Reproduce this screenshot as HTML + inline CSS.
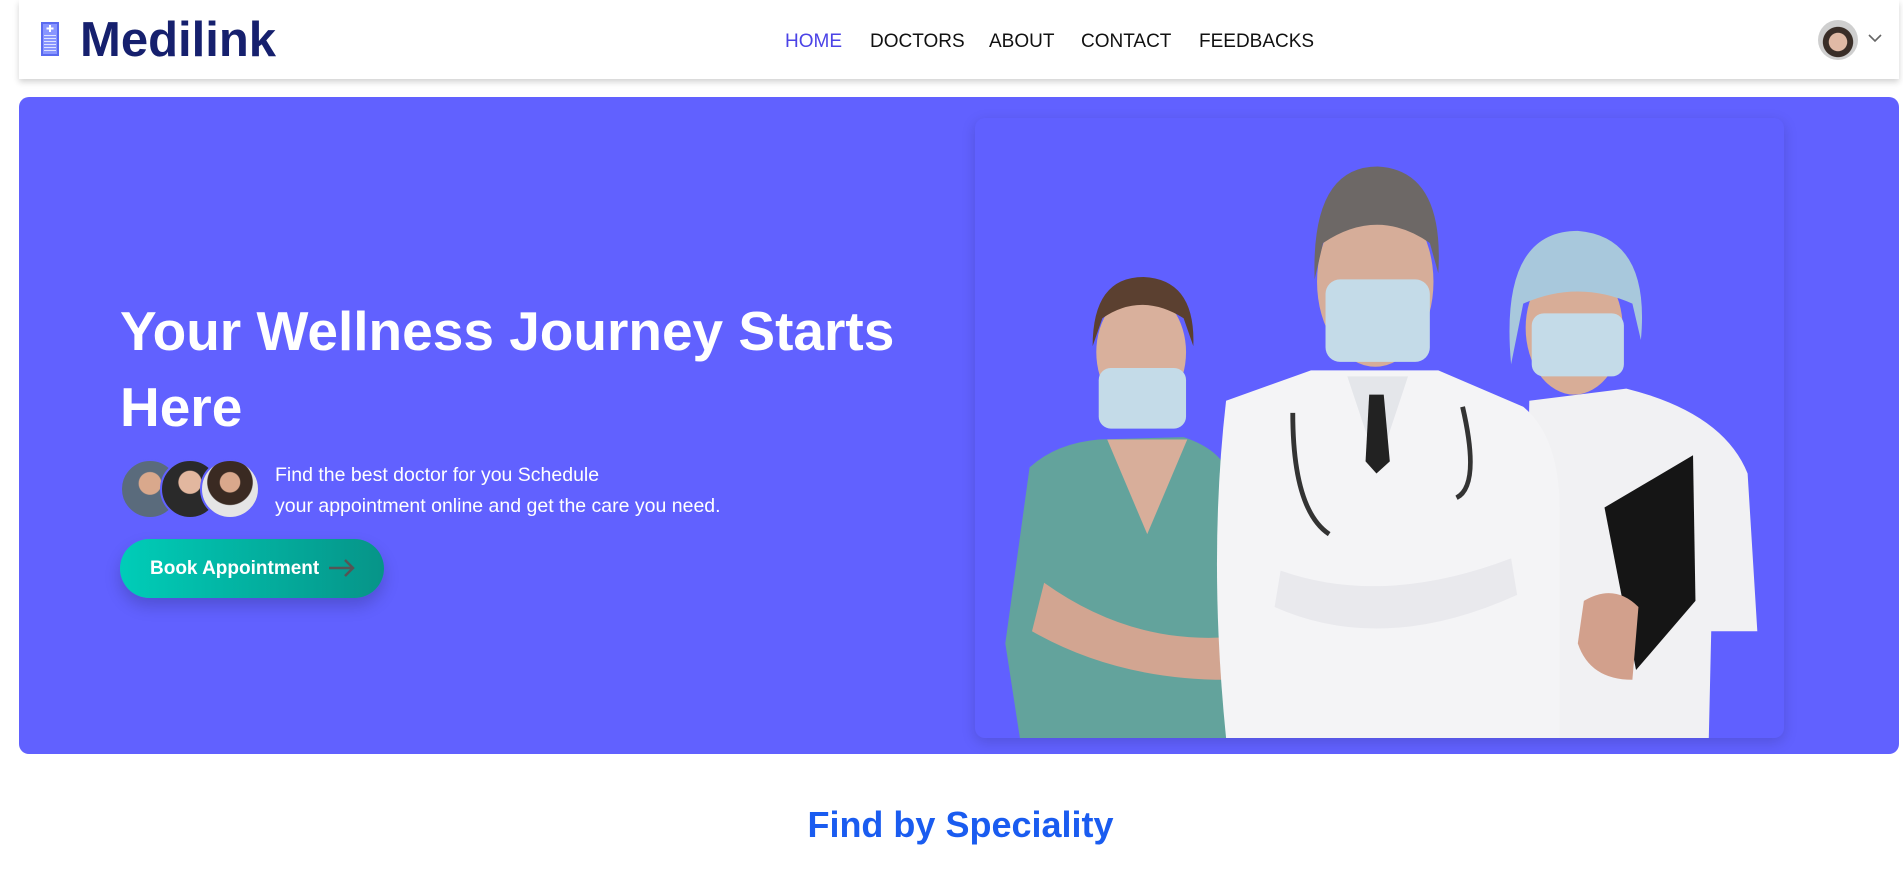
<!DOCTYPE html>
<html><head><meta charset="utf-8">
<style>
*{margin:0;padding:0;box-sizing:border-box}
body{width:1903px;height:876px;overflow:hidden;background:#fff;font-family:"Liberation Sans",sans-serif;position:relative}
.nav{position:absolute;left:19px;top:0;width:1880px;height:79px;background:#fff;box-shadow:0 3px 6px rgba(0,0,0,.18)}
.logo{position:absolute;left:61px;top:12px;font-size:49px;font-weight:bold;color:#16206e}
.links{position:absolute;top:31px;font-size:19px;color:#111}
.links span{position:absolute;white-space:nowrap}
.hero{position:absolute;left:19px;top:97px;width:1880px;height:657px;background:#6161ff;border-radius:10px}
h1{position:absolute;left:120px;top:293px;font-size:55px;line-height:76px;color:#fff;font-weight:bold;width:820px}
.av{position:absolute;top:459px;width:60px;height:60px;border-radius:50%;border:2px solid #6161ff}
.txt{position:absolute;left:275px;top:460px;font-size:19.5px;line-height:31px;color:#fff}
.btn{position:absolute;left:120px;top:539px;width:264px;height:59px;border-radius:30px;background:linear-gradient(90deg,#00cdb8,#069488);box-shadow:0 8px 16px rgba(0,0,0,.18);color:#fff;font-weight:bold;font-size:19px;line-height:59px;padding-left:30px}
.card{position:absolute;left:975px;top:118px;width:809px;height:620px;border-radius:10px;background:#6060ff;box-shadow:0 4px 14px rgba(0,0,0,.15);overflow:hidden}
.sp{position:absolute;left:9px;width:1903px;top:804px;text-align:center;font-size:36px;font-weight:bold;color:#1a5cf0}
</style></head><body>
<div class="nav">
  <svg style="position:absolute;left:22px;top:22px" width="18" height="34" viewBox="0 0 18 34"><rect x="0" y="0" width="18" height="34" fill="#5a6af0"/><rect x="2" y="2" width="14" height="30" fill="#8895ff"/><g fill="#fff"><rect x="8" y="3" width="2" height="7"/><rect x="5.5" y="5.5" width="7" height="2"/></g><g fill="#dfe3ff"><rect x="3" y="13" width="12" height="1"/><rect x="3" y="16" width="12" height="1"/><rect x="3" y="19" width="12" height="1"/><rect x="3" y="22" width="12" height="1"/><rect x="3" y="25" width="12" height="1"/><rect x="3" y="28" width="12" height="1"/></g></svg>
  <div class="logo">Medilink</div>
  <div class="links">
    <span style="left:766px;color:#4b43e6">HOME</span>
    <span style="left:851px">DOCTORS</span>
    <span style="left:970px">ABOUT</span>
    <span style="left:1062px">CONTACT</span>
    <span style="left:1180px">FEEDBACKS</span>
  </div>
  <div style="position:absolute;left:1799px;top:20px;width:40px;height:40px;border-radius:50%;background:radial-gradient(circle at 50% 55%,#e0b9a5 0 30%,#3a2e28 32% 50%,#cfcfcf 52%)"></div>
  <svg style="position:absolute;left:1849px;top:34px" width="14" height="9" viewBox="0 0 14 9"><path d="M1 1l6 6 6-6" stroke="#666" stroke-width="1.6" fill="none"/></svg>
</div>
<div class="hero"></div>
<h1>Your Wellness Journey Starts Here</h1>
<div class="av" style="left:120px;background:radial-gradient(circle at 50% 40%,#d9a88c 0 25%,#5a6b7c 27%)"></div>
<div class="av" style="left:160px;background:radial-gradient(circle at 50% 38%,#e2b79f 0 25%,#2a2a2a 27%)"></div>
<div class="av" style="left:200px;background:radial-gradient(circle at 50% 38%,#d9a88c 0 22%,#3a2a22 24% 50%,#e5e5e5 52%)"></div>
<div class="txt">Find the best doctor for you Schedule<br>your appointment online and get the care you need.</div>
<div class="btn">Book Appointment <svg style="position:absolute;left:208px;top:19px" width="28" height="20" viewBox="0 0 28 20"><path d="M1 10h24M17 2l8 8-8 8" stroke="#555" stroke-width="2.5" fill="none"/></svg></div>
<div class="card">
<svg width="809" height="620" viewBox="803 97 667 511" preserveAspectRatio="none">
  <path d="M848 385 Q870 365 905 362 L975 360 Q1005 370 1012 390 L1015 608 L840 608 L828 530 Z" fill="#63a39c"/>
  <path d="M912 362 L945 440 L978 362 Z" fill="#d8ae9a"/>
  <path d="M860 480 Q930 530 1010 525 L1010 560 Q920 560 850 520 Z" fill="#d2a591"/>
  <ellipse cx="940" cy="290" rx="37" ry="50" fill="#d9b09c"/>
  <path d="M900 285 Q900 228 942 228 Q985 230 983 285 L975 262 Q940 240 908 262 Z" fill="#5b4030"/>
  <rect x="905" y="303" width="72" height="50" rx="10" fill="#c4dbe8"/>
  <path d="M1260 330 L1340 320 Q1420 340 1440 390 L1448 520 L1410 520 L1408 608 L1255 608 Z" fill="#f1f1f3"/>
  <ellipse cx="1297" cy="270" rx="40" ry="55" fill="#d8ad97"/>
  <path d="M1245 300 Q1235 190 1300 190 Q1360 195 1352 280 L1345 250 Q1300 230 1255 250 Z" fill="#a8c8dc"/>
  <rect x="1262" y="258" width="76" height="52" rx="10" fill="#c4dbe8"/>
  <path d="M1322 418 L1395 375 L1397 495 L1348 552 Z" fill="#151515"/>
  <path d="M1305 495 Q1330 480 1350 500 L1345 560 Q1310 560 1300 530 Z" fill="#d2a08c"/>
  <path d="M1010 330 L1080 305 L1185 305 L1255 335 Q1285 360 1285 420 L1285 608 L1010 608 Q995 460 1010 330 Z" fill="#f4f4f6"/>
  <path d="M1110 310 L1135 385 L1160 310 Z" fill="#e4e6ea"/>
  <path d="M1128 325 L1140 325 L1145 380 L1134 390 L1125 380 Z" fill="#222"/>
  <path d="M1065 340 Q1065 420 1095 440 M1205 335 Q1220 400 1200 410" stroke="#333" stroke-width="4" fill="none"/>
  <ellipse cx="1133" cy="232" rx="48" ry="70" fill="#d6ad99"/>
  <path d="M1083 230 Q1080 137 1135 137 Q1190 140 1185 225 L1178 200 Q1135 170 1090 200 Z" fill="#6d6866"/>
  <rect x="1092" y="230" width="86" height="68" rx="12" fill="#c4dbe8"/>
  <path d="M1055 470 Q1140 500 1245 460 L1250 490 Q1140 540 1050 500 Z" fill="#e9e9ed"/>
</svg>
</div>
<div class="sp">Find by Speciality</div>
</body></html>
